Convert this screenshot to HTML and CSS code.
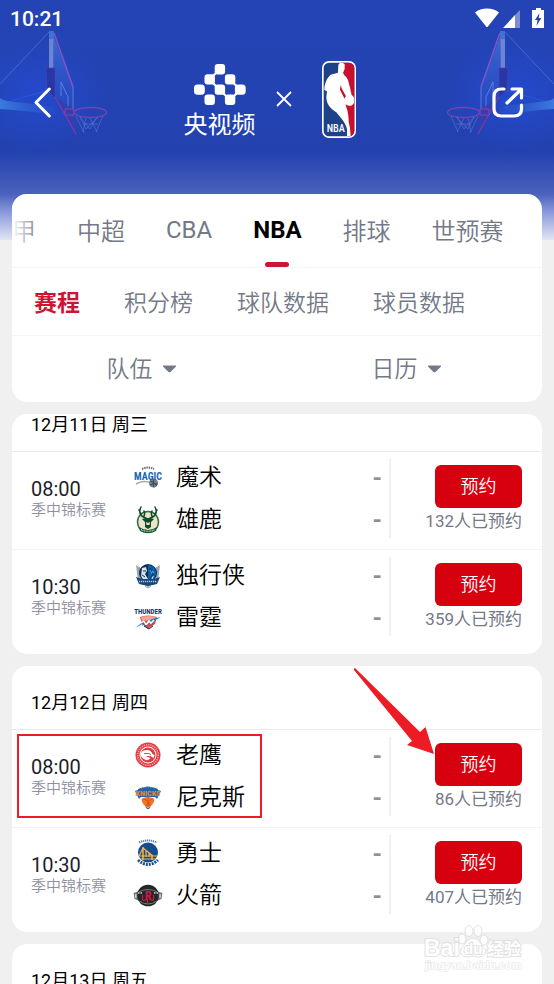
FILE: index.html
```html
<!DOCTYPE html>
<html lang="zh-CN">
<head>
    <meta charset="UTF-8">
    <meta name="viewport" content="width=device-width, initial-scale=1.0">
    <title>央视频 NBA 赛程</title>
    <link rel="stylesheet" href="styles.css">
</head>
<body>
<div class="app">

    <!-- Hero artwork -->
    <svg class="hoop" viewBox="0 0 130 160" aria-hidden="true">
        <defs>
            <radialGradient id="glow">
                <stop offset="0" stop-color="#2450e8" stop-opacity=".6"/>
                <stop offset="1" stop-color="#2450e8" stop-opacity="0"/>
            </radialGradient>
            <linearGradient id="glass" x1="0" y1="0" x2="0" y2="1">
                <stop offset="0" stop-color="#4c7fe0"/>
                <stop offset="1" stop-color="#2a50c4" stop-opacity=".4"/>
            </linearGradient>
            <linearGradient id="arm" x1="0" y1="0" x2="1" y2="0">
                <stop offset="0" stop-color="#3f84e6"/>
                <stop offset="1" stop-color="#2950c8" stop-opacity=".5"/>
            </linearGradient>
        </defs>
        <g id="hoop-art">
            <ellipse cx="38" cy="96" rx="72" ry="56" fill="url(#glow)"/>
            <path d="M50 31 0 84" stroke="#5278dc" stroke-width="1" opacity=".8"/>
            <path d="M56 88 0 104" stroke="#2f62ee" stroke-width="1" opacity=".7"/>
            <path d="M53 34 73 88 72 110 55 96z" fill="url(#glass)" opacity=".8"/>
            <path d="M54 33 73 87" stroke="#8e58cc" stroke-width="1.6"/>
            <path d="M49 31h4.500v37H49z" fill="#7d8fdb"/>
            <path d="M49 31h4.500v8H49z" fill="#477bd6"/>
            <path d="M0 98C4 102 14 101 54 107l2 7C36 113 18 110 0 109z" fill="url(#arm)"/>
            <path d="M46 68h9v30l-8-8z" fill="#2a35a2" stroke="#5a3fb4" stroke-width=".7"/>
            <path d="M61 82v14M61 82l7 15v12M73 87v24" fill="none" stroke="#6f8fe0" stroke-width=".9"/>
            <path d="M55 97 76 111v24L56 101z" fill="#3b3dac" opacity=".8"/>
            <path d="M55 97 76 134" stroke="#913ba6" stroke-width="1.200"/>
            <path d="M65 109h9v6h-9z" fill="none" stroke="#a3409f" stroke-width="1"/>
            <ellipse cx="90.500" cy="112.500" rx="16" ry="5" fill="none" stroke="#8345b0" stroke-width="1.300"/>
            <path d="M76 116l8 17M80 117l10 12 7-12M86 118l-3 14M90 118l7 14M103 116l-7 16M98 117l-12 12-6-12M84 124h14" fill="none" stroke="#667ed0" stroke-width=".6"/>
        </g>
    </svg>
    <svg class="hoop hoop-right" viewBox="0 0 130 160" aria-hidden="true"><use href="#hoop-art"/></svg>

    <!-- Status bar -->
    <div class="status-bar">
        <span>10:21</span>
        <svg width="70" height="22" viewBox="0 0 70 22" aria-hidden="true">
            <path d="M1 4.500C7-1 19-1 25 4.500L13.500 19h-1z" fill="#fff"/>
            <path d="M46 2v18h-5V7z" fill="#fff" opacity=".4"/>
            <path d="M29 20 41 7v13z" fill="#fff"/>
            <path d="M62 0h5v2h3v18H58V2h4z" fill="#fff"/>
            <path d="M65.500 5 61 12h2.500l-1 6 4.800-8h-2.600z" fill="#2343b4"/>
        </svg>
    </div>

    <header class="header">
        <button class="icon-btn" aria-label="返回">
            <svg width="17" height="31" viewBox="0 0 17 31"><path d="M15.300 2 2 15.500 15.300 29" fill="none" stroke="#fff" stroke-width="3" stroke-linecap="round" stroke-linejoin="round"/></svg>
        </button>
        <div class="brands">
            <div class="ysp">
                <svg width="52" height="42" viewBox="0 0 52 42" aria-hidden="true">
                    <g fill="#fff">
                        <rect x="20.700" y="0" width="10.400" height="10.400" rx="3"/>
                        <rect x="10.500" y="10.200" width="10.400" height="10.400" rx="3"/>
                        <rect x="30.900" y="10.200" width="10.400" height="10.400" rx="3"/>
                        <rect x="0" y="20.400" width="10.800" height="10.400" rx="3.500"/>
                        <rect x="20.700" y="20.400" width="10.400" height="10.400" rx="3"/>
                        <rect x="40.900" y="20.400" width="10.800" height="10.400" rx="3.500"/>
                        <rect x="10.500" y="30.600" width="10.400" height="10.400" rx="3"/>
                        <rect x="30.900" y="30.600" width="10.400" height="10.400" rx="3"/>
                    </g>
                    <path d="M23 8l-4.500 4.500M18.500 18.500l4.500 4.500M39 18.500l4.500 4.500M28.500 28.500l4.500 4.500M43 29l-4 4" stroke="#fff" stroke-width="2.200"/>
                </svg>
                <span>央视频</span>
            </div>
            <svg class="times" width="16" height="16" viewBox="0 0 16 16" aria-hidden="true"><path d="M1 1l14 14M15 1 1 15" stroke="#fff" stroke-width="1.800"/></svg>
            <svg width="34" height="77" viewBox="0 0 102 231" role="img" aria-label="NBA">
                <clipPath id="nba"><rect x="5" y="5" width="92" height="221" rx="16"/></clipPath>
                <rect width="102" height="231" rx="21" fill="#fff"/>
                <g clip-path="url(#nba)">
                    <path d="M0 0h102v231H0z" fill="#1d428a"/>
                    <path d="M58 0h44v231H80L68 140 52 88z" fill="#c8102e"/>
                    <path d="M49 12C51 3 64 3 68 10v14l-5 12 5 8c10 6 12 20 15 32l6 26c10 6 11 22 3 29-8 6-19 4-23-4-4-9-2-16 3-21L60 84l-4-12-2 14 13 26 5 24c7 18 8 34 8 46l4 20 2 22-11 4v-24c-6-22-20-34-32-50C24 142 13 128 13 108l2-17-8-4C7 68 14 52 26 41l22-6z" fill="#fff"/>
                </g>
                <text x="14" y="213" class="nba-text">NBA</text>
            </svg>
        </div>
        <button class="icon-btn" aria-label="分享">
            <svg width="32" height="31" viewBox="0 0 32 31"><path d="M12 2H9.500Q2 2 2 9.500V22q0 7 7.500 7H22q7.500 0 7.500-7v-4M20 2h9.500v9M29 2.500 15 16" fill="none" stroke="#fff" stroke-width="3.200" stroke-linecap="round" stroke-linejoin="round"/></svg>
        </button>
    </header>

    <main class="content">
        <!-- League tabs and filters -->
        <section class="card">
            <nav class="leagues">
                <button>甲</button>
                <button>中超</button>
                <button class="latin">CBA</button>
                <button class="active">NBA</button>
                <button>排球</button>
                <button>世预赛</button>
            </nav>
            <nav class="sections">
                <button class="active">赛程</button>
                <button>积分榜</button>
                <button>球队数据</button>
                <button>球员数据</button>
            </nav>
            <div class="filters">
                <label class="filter">
                    <select aria-label="队伍"><option>队伍</option></select>
                    <svg width="15" height="8" viewBox="0 0 15 8" aria-hidden="true"><path d="M1.500.5h12q1 .5.300 1.300L8.500 7q-1 .7-2 0L1.200 1.800Q.5 1 1.500.5z" fill="#747987"/></svg>
                </label>
                <label class="filter">
                    <select aria-label="日历"><option>日历</option></select>
                    <svg width="15" height="8" viewBox="0 0 15 8" aria-hidden="true"><path d="M1.500.5h12q1 .5.300 1.300L8.500 7q-1 .7-2 0L1.200 1.800Q.5 1 1.500.5z" fill="#747987"/></svg>
                </label>
            </div>
        </section>

        <section class="card day day-scrolled">
            <h2>12月11日 周三</h2>
            <article class="match">
                <div class="when"><time>08:00</time><span>季中锦标赛</span></div>
                <div class="teams">
                    <div class="team">
                        <svg class="logo" viewBox="0 0 30 30" aria-hidden="true">
                            <path d="M9 6q6-3 12 0" fill="none" stroke="#6d6a68" stroke-width="2" stroke-dasharray="1.500 .8"/>
                            <path d="M3 21q8-5 18 0" fill="none" stroke="#a4a6a8" stroke-width="1.500"/>
                            <circle cx="20.500" cy="20" r="4.500" fill="#77818b"/>
                            <path d="M17 18q4 0 7 5M16.500 22q4-2 8-1M21 16.500q-2 4 0 8" fill="none" stroke="#263c56" stroke-width=".8"/>
                            <text x="15" y="17" class="logo-text magic">MAGIC</text>
                        </svg>
                        <span>魔术</span><b>-</b>
                    </div>
                    <div class="team">
                        <svg class="logo" viewBox="0 0 30 30" aria-hidden="true">
                            <circle cx="15" cy="17" r="10.500" fill="#ede3c8" stroke="#317044" stroke-width="1.500"/>
                            <path d="M6 22q9 6 18 0l-1 4q-8 4-16 0z" fill="#0f5a35"/>
                            <path d="M8 24.500q7 3.500 14 0" fill="none" stroke="#dfe7d3" stroke-width="1.100" stroke-dasharray="1 .6"/>
                            <path d="M13 13C8 12 5 8 8 2M8 9 6 5M10.500 12q2-3 .5-6M17 13c5-1 8-5 5-11M22 9l2-4M19.500 12q-2-3-.5-6" fill="none" stroke="#0d4c2b" stroke-width="1.500" stroke-linecap="round"/>
                            <path d="M9 14l4-1h4l4 1-3 3v5l-3 2-3-2v-5z" fill="#0d4c2b"/>
                            <path d="M13 17l2 1 2-1-.5 3h-3z" fill="#ede3c8"/>
                        </svg>
                        <span>雄鹿</span><b>-</b>
                    </div>
                </div>
                <div class="book"><button>预约</button><span>132人已预约</span></div>
            </article>
            <article class="match">
                <div class="when"><time>10:30</time><span>季中锦标赛</span></div>
                <div class="teams">
                    <div class="team">
                        <svg class="logo" viewBox="0 0 30 30" aria-hidden="true">
                            <path d="M3 4l5 3q7-6 14 0l5-3-2 16-10 6-10-6z" fill="#9ba7ae"/>
                            <circle cx="15" cy="12" r="9" fill="#0d2e57"/>
                            <path d="M15 4a8 8 0 0 1 0 16z" fill="#0065ae"/>
                            <path d="M9 7l4-1 1 4-2 3 3 5-4 2-3-5zM17 9l4 2-2 2zM18 16l3-1-2 4z" fill="#dce3e8"/>
                            <path d="M10 10h3M9 14l3 2M17 7l3 6-3 6" fill="none" stroke="#102a4e" stroke-width="1"/>
                            <path d="M3 16l6 2h12l6-2-3 7-9 2-9-2z" fill="#16477f"/>
                            <path d="M6 20.500h18" stroke="#b8c9d4" stroke-width="1.600" stroke-dasharray="1.200 .8"/>
                            <path d="M12 25l3 2 3-2" fill="none" stroke="#8d9da9"/>
                        </svg>
                        <span>独行侠</span><b>-</b>
                    </div>
                    <div class="team">
                        <svg class="logo" viewBox="0 0 30 30" aria-hidden="true">
                            <path d="M7 14q8-3 17 0l-2 7-7 5-6-5z" fill="#e24b3e"/>
                            <path d="M8 14q8-2 15 0l-2 3-12 1z" fill="#f4a39a"/>
                            <path d="M2 25l9-7-2 5 10-7 9-2-7 4-3 7 1-6-8 5 2-5z" fill="#1681c4"/>
                            <path d="M8 20q3-3 4 0t4-2l2 2 3-3" fill="none" stroke="#fff" stroke-width="1.600"/>
                            <path d="M11 23l5 3 4-3" fill="none" stroke="#1d396d"/>
                            <text x="15" y="11" class="logo-text thunder">THUNDER</text>
                        </svg>
                        <span>雷霆</span><b>-</b>
                    </div>
                </div>
                <div class="book"><button>预约</button><span>359人已预约</span></div>
            </article>
        </section>

        <section class="card day">
            <h2>12月12日 周四</h2>
            <article class="match">
                <div class="when"><time>08:00</time><span>季中锦标赛</span></div>
                <div class="teams">
                    <div class="team">
                        <svg class="logo" viewBox="0 0 30 30" aria-hidden="true">
                            <circle cx="15" cy="14" r="12.500" fill="#e23a43"/>
                            <circle cx="15" cy="14" r="10.300" fill="none" stroke="#fff" stroke-width="1.500" stroke-dasharray="1.200 1" opacity=".6"/>
                            <circle cx="15" cy="14" r="8.500" fill="#fff"/>
                            <circle cx="15" cy="14" r="7.500" fill="#e23a43"/>
                            <path d="M7.500 13Q9 9 14 9q4 0 5.500 4l2 1-1 3-3-2-5 0 5 2q-4 5-9-1z" fill="#fff"/>
                            <path d="M11 12.500h5l2 1.500" fill="none" stroke="#e23a43" stroke-width=".9"/>
                        </svg>
                        <span>老鹰</span><b>-</b>
                    </div>
                    <div class="team">
                        <svg class="logo" viewBox="0 0 30 30" aria-hidden="true">
                            <path d="M5 6q10-5 20 0l-1 2H6z" fill="#20539e"/>
                            <path d="M8 5.500q7-3 14 0" fill="none" stroke="#a9b9d2" stroke-width="1" stroke-dasharray="1 .8"/>
                            <path d="M2 8Q15 2 28 8l-4 8-2-2H8l-2 2z" fill="#2464ad"/>
                            <path d="M8.500 16q6-4 13 0-.5 6-6.500 9-6-3-6.500-9z" fill="#f57424"/>
                            <path d="M10 16q6 1 7 7M20 15q-5 3-7 8M15 13v11" fill="none" stroke="#c3501d" stroke-width=".8"/>
                            <path d="M12.500 24l2.500 2 2.500-2" fill="none" stroke="#20539e"/>
                            <text x="15" y="13" class="logo-text knicks">KNICKS</text>
                        </svg>
                        <span>尼克斯</span><b>-</b>
                    </div>
                </div>
                <div class="book"><button>预约</button><span>86人已预约</span></div>
                <div class="mark-box"></div>
                <svg class="mark-arrow" width="82" height="88" viewBox="0 0 82 88" aria-hidden="true"><path d="M2 0Q0 1 1 2L59 73 54 77 81 86 72.500 59 67 64z" fill="#ed1c24"/></svg>
            </article>
            <article class="match">
                <div class="when"><time>10:30</time><span>季中锦标赛</span></div>
                <div class="teams">
                    <div class="team">
                        <svg class="logo" viewBox="0 0 30 30" aria-hidden="true">
                            <path d="M6 3.500q9-4 18 0" fill="none" stroke="#5d80b4" stroke-width="2" stroke-dasharray="1.300 .7"/>
                            <circle cx="15" cy="13.500" r="10" fill="#174a8f"/>
                            <path d="M6 17h18M7 20h16M10 9l10 8M10 9l-4 8M13 12v6M16 14v4" fill="none" stroke="#f4b942" stroke-width="1.200"/>
                            <path d="M10 8v13M19 16v5" stroke="#f4b942" stroke-width="1.500"/>
                            <path d="M5 21q10 9 20 0" fill="none" stroke="#1d4f96" stroke-width="3" stroke-dasharray="2 1"/>
                        </svg>
                        <span>勇士</span><b>-</b>
                    </div>
                    <div class="team">
                        <svg class="logo" viewBox="0 0 30 30" aria-hidden="true">
                            <path d="M.5 12q14-7 29 0l-1 6q-13 7-27 0z" fill="#777b7c"/>
                            <path d="M2 15h26" stroke="#d2d4d3" stroke-width="3.500" stroke-dasharray="1.500 1.200"/>
                            <circle cx="15" cy="14.500" r="10.800" fill="#242728"/>
                            <path d="M6 11q9-5 18 0M6 20q9 6 18 0" fill="none" stroke="#737b7b" stroke-width="1"/>
                            <path d="M5 12h4M21 12h4" stroke="#d2d4d3" stroke-width="1.500" stroke-dasharray="1 .5"/>
                            <path d="M9.500 14v5h4M20.500 14v5h-3M14.500 18v5" fill="none" stroke="#d31745" stroke-width="1.200"/>
                            <text x="15" y="18.500" class="logo-text rockets">R</text>
                        </svg>
                        <span>火箭</span><b>-</b>
                    </div>
                </div>
                <div class="book"><button>预约</button><span>407人已预约</span></div>
            </article>
        </section>

        <section class="card day">
            <h2>12月13日 周五</h2>
        </section>
    </main>

    <svg class="watermark" width="102" height="50" viewBox="0 0 102 50" aria-hidden="true">
        <g fill="#fff" stroke="#dcdcdc" stroke-width="1">
            <ellipse cx="39" cy="16" rx="4" ry="5"/>
            <ellipse cx="46" cy="8" rx="4" ry="5.500"/>
            <ellipse cx="55" cy="8" rx="4" ry="5.500"/>
            <ellipse cx="61" cy="17" rx="4" ry="5"/>
            <path d="M50 15q5 0 9 7 7 7 1 11-4 2-10 0-7 2-10 0-6-4 1-11 4-7 9-7z"/>
        </g>
        <text x="1" y="33" class="wm-main">Bai</text>
        <text x="41" y="31" class="wm-du">du</text>
        <text x="64" y="32" class="wm-cjk">经验</text>
        <text x="2" y="46" class="wm-url">jingyan.baidu.com</text>
    </svg>
</div>
</body>
</html>
```

FILE: styles.css
```css
/* General Styles */
* {
    box-sizing: border-box;
}

body {
    margin: 0;
    font-family: Roboto, "Noto Sans CJK SC", sans-serif;
    background: #f0f0f0;
    color: #000;
}

button,
select {
    font: inherit;
    color: inherit;
    background: none;
    border: none;
    margin: 0;
    padding: 0;
    cursor: pointer;
}

svg {
    display: block;
    flex: none;
}

.app {
    position: relative;
    height: 100vh;
    overflow: hidden;
    background: linear-gradient(#2444b6 0, #2342b0 152px, #4a62bd 194px, #8293d8 210px, #e2e5f3 240px) no-repeat;
    background-size: 100% 240px;
}

/* Hero artwork */
.hoop {
    position: absolute;
    top: 0;
    left: 0;
    width: 130px;
    height: 160px;
    opacity: 0.85;
}

.hoop-right {
    left: auto;
    right: 0;
    transform: scaleX(-1);
}

/* Status bar */
.status-bar {
    position: relative;
    display: flex;
    justify-content: space-between;
    align-items: center;
    height: 38px;
    padding: 0 10px;
    font-size: 21px;
    font-weight: 500;
    color: #fff;
}

/* Header */
.header {
    position: relative;
    display: flex;
    justify-content: space-between;
    align-items: center;
    height: 128px;
    padding: 0 30px 0 34px;
}

.brands {
    display: flex;
    align-items: center;
    margin: 0 4px 6px 0;
}

.ysp {
    display: flex;
    flex-direction: column;
    align-items: center;
    gap: 4px;
    padding-top: 6px;
    font-size: 24px;
    line-height: 30px;
    color: #fff;
}

.times {
    margin: 0 30px 0 20px;
}

.nba-text {
    font-family: "Roboto Condensed", Roboto, sans-serif;
    font-size: 31px;
    font-weight: 500;
    fill: #fff;
}

/* Cards */
.content {
    position: relative;
    display: flex;
    flex-direction: column;
    gap: 12px;
    padding: 28px 12px 0;
}

.card {
    background: #fff;
    border-radius: 15px;
    overflow: hidden;
}

/* League tabs */
.leagues {
    position: relative;
    display: flex;
    gap: 41px;
    height: 74px;
    border-bottom: 1px solid #f5f5f6;
    font-size: 24px;
    font-weight: 350;
    color: #747987;
    white-space: nowrap;
}

.leagues button,
.sections button {
    padding-bottom: 2px;
}

.leagues::before {
    content: "";
    position: absolute;
    left: 0;
    width: 28px;
    height: 100%;
    background: linear-gradient(90deg, #fff, rgba(255, 255, 255, 0));
}

.leagues .latin {
    font-weight: 400;
}

.leagues .active {
    position: relative;
    font-weight: bold;
    color: #000;
}

.leagues .active::after {
    content: "";
    position: absolute;
    left: 50%;
    bottom: 0;
    width: 24px;
    height: 5px;
    margin-left: -12px;
    border-radius: 3px;
    background: #cc1433;
}

/* Section tabs */
.sections {
    display: flex;
    gap: 44px;
    height: 68px;
    padding-left: 22px;
    border-bottom: 1px solid #f5f5f6;
    font-size: 23px;
    font-weight: 350;
    color: #747987;
    white-space: nowrap;
}

.sections .active {
    font-weight: bold;
    color: #cc1433;
}

/* Filters */
.filters {
    display: flex;
    height: 66px;
    font-size: 23px;
    font-weight: 350;
    color: #747987;
}

.filter {
    flex: 1;
    display: flex;
    justify-content: center;
    align-items: center;
    gap: 9px;
    padding-right: 6px;
}

.filter select {
    appearance: none;
}

/* Match days */
.day {
    padding-bottom: 6px;
}

.day h2 {
    margin: 0;
    padding: 27px 19px 16px;
    border-bottom: 1px solid #e9e9eb;
    font-size: 18px;
    line-height: 20px;
    font-weight: normal;
}

.day-scrolled h2 {
    padding-top: 1px;
}

.match {
    position: relative;
    display: flex;
    height: 98px;
    padding: 7px 20px 11px 19px;
    border-bottom: 1px solid #f3f3f5;
}

.match:last-child {
    border-bottom-color: transparent;
}

.when {
    width: 102px;
    padding-top: 18px;
    font-size: 15px;
    line-height: 18px;
    color: #8f919f;
}

.when time {
    display: block;
    font-size: 20px;
    line-height: 24px;
    color: #1d1d2b;
}

.when span {
    display: block;
    font-weight: 350;
}

.teams {
    flex: 1;
    display: flex;
    flex-direction: column;
    gap: 8px;
    border-right: 2px solid #f0f0f6;
    padding: 2px 7px 0 0;
}

.team {
    display: flex;
    align-items: center;
    gap: 13px;
    height: 34px;
    font-size: 23px;
    font-weight: 350;
    line-height: 34px;
}

.logo {
    width: 30px;
    height: 30px;
}

.logo-text {
    font-family: "Roboto Condensed", Roboto, sans-serif;
    font-weight: bold;
    text-anchor: middle;
}

.magic {
    font-size: 10px;
    fill: #1866b5;
}

.thunder {
    font-size: 7px;
    fill: #1c355e;
}

.knicks {
    font-size: 8px;
    fill: #f58426;
}

.rockets {
    font-size: 12px;
    fill: #d31745;
}

.team b {
    margin-left: auto;
    font-size: 24px;
    color: #8f8f94;
}

.book {
    width: 131px;
    padding-top: 6px;
    display: flex;
    flex-direction: column;
    align-items: flex-end;
    font-size: 17px;
    line-height: 26px;
    color: #747987;
    white-space: nowrap;
}

.book button {
    width: 87px;
    height: 43px;
    border-radius: 6px;
    background: #d7000f;
    font-size: 18px;
    font-weight: 350;
    color: #fff;
}

/* Highlight on the match to book */
.mark-box {
    position: absolute;
    left: 5px;
    top: 4px;
    width: 245px;
    height: 84px;
    border: 2px solid #ed1c24;
}

.mark-arrow {
    position: absolute;
    right: 107px;
    top: -62px;
}

/* Watermark */
.watermark {
    position: absolute;
    right: 29px;
    bottom: 11px;
    opacity: 0.8;
}

.watermark text {
    fill: #fff;
    stroke: #dcdcdc;
    stroke-width: 2px;
    paint-order: stroke;
    font-family: "Liberation Sans", "Noto Sans CJK SC", sans-serif;
    font-weight: bold;
}

.watermark .wm-main {
    font-size: 23px;
}

.watermark .wm-du {
    font-size: 15px;
}

.watermark .wm-cjk {
    font-size: 17px;
}

.watermark .wm-url {
    font-size: 11px;
    stroke-width: 1px;
}
```
